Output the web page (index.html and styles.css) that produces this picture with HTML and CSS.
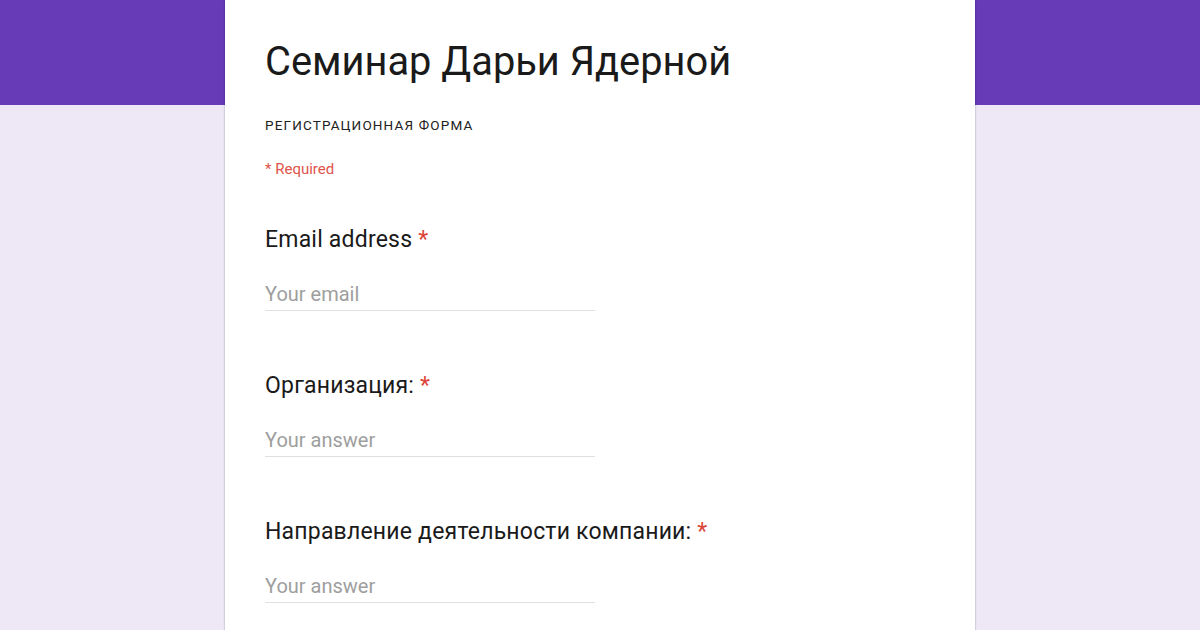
FILE: index.html
```html
<!DOCTYPE html>
<html lang="ru">
<head>
<meta charset="UTF-8">
<meta name="viewport" content="width=device-width, initial-scale=1.0">
<title>Семинар Дарьи Ядерной</title>
<link rel="stylesheet" href="styles.css">
</head>
<body>
    <form class="form-card">
        <h1 class="form-title">Семинар Дарьи Ядерной</h1>
        <div class="form-desc">РЕГИСТРАЦИОННАЯ ФОРМА</div>
        <div class="required-note">* Required</div>

        <div class="question">
            <label for="email">Email address <span class="star">*</span></label>
            <input type="email" id="email" name="email" placeholder="Your email">
        </div>
        <div class="question">
            <label for="org">Организация: <span class="star">*</span></label>
            <input type="text" id="org" name="org" placeholder="Your answer">
        </div>
        <div class="question">
            <label for="field">Направление деятельности компании: <span class="star">*</span></label>
            <input type="text" id="field" name="field" placeholder="Your answer">
        </div>
    </form>
</body>
</html>
```

FILE: styles.css
```css
body {
    margin: 0;
    padding: 0;
    font-family: Roboto, "Liberation Sans", Arial, sans-serif;
    background: linear-gradient(#673ab7 0, #673ab7 105px, #ede7f6 105px);
    min-height: 630px;
    overflow: hidden;
}

.form-card {
    width: 750px;
    min-height: 700px;
    margin: 0 auto;
    padding: 38px 40px 0;
    box-sizing: border-box;
    background-color: #fff;
    box-shadow: 0 0 2px rgba(0, 0, 0, 0.2), 0 2px 2px rgba(0, 0, 0, 0.14);
}

.form-title {
    margin: 0;
    font-size: 39.8px;
    font-weight: 400;
    line-height: 48px;
    color: #1a1a1a;
}

.form-desc {
    margin-top: 29px;
    font-size: 13.5px;
    letter-spacing: 1.15px;
    line-height: 20px;
    color: #212121;
}

.required-note {
    margin-top: 24px;
    font-size: 15px;
    line-height: 20px;
    color: #e0544b;
}

.question {
    margin-top: 61px;
}

.required-note + .question {
    margin-top: 47px;
}

.question label {
    display: block;
    font-size: 23px;
    letter-spacing: 0.2px;
    line-height: 28px;
    color: #1a1a1a;
}

.star {
    color: #db4437;
}

.question input {
    display: block;
    width: 330px;
    height: 24px;
    margin-top: 28px;
    padding: 0 0 4px;
    border: none;
    border-bottom: 1px solid #e0e0e0;
    font-family: inherit;
    font-size: 20px;
    color: #212121;
    outline: none;
    background: transparent;
    box-sizing: content-box;
}

.question input::placeholder {
    color: #9e9e9e;
}
```
